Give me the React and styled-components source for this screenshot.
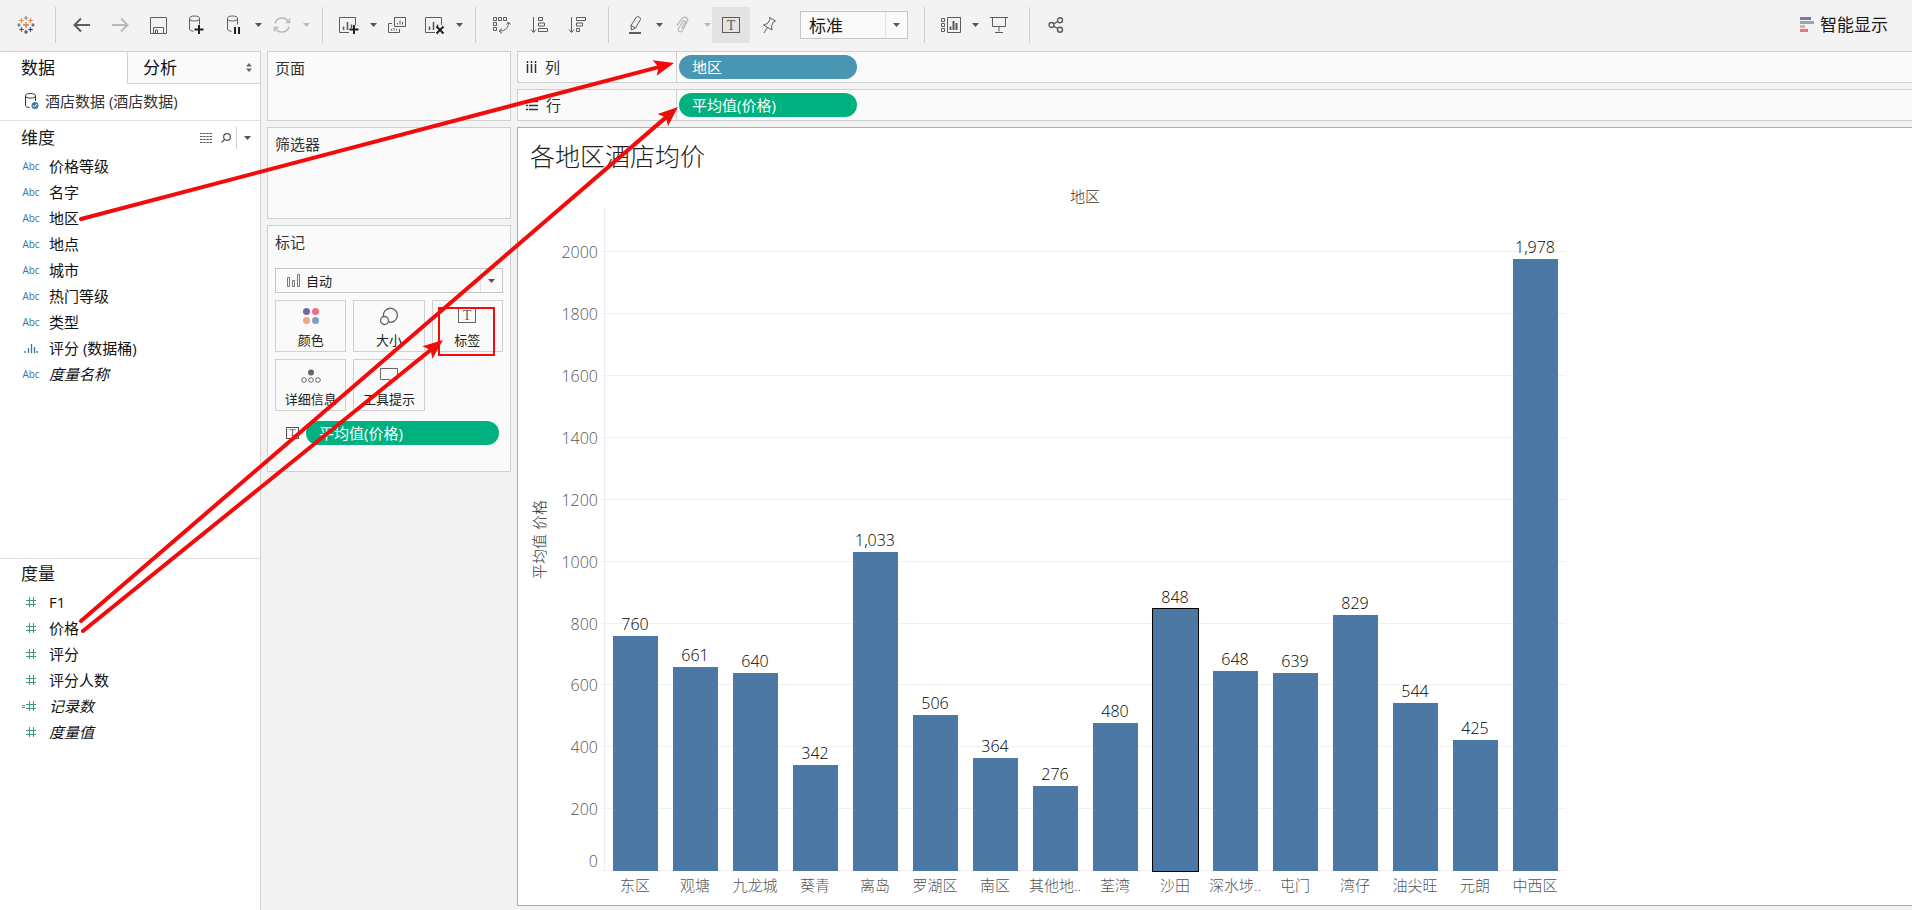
import styled, { createGlobalStyle, css } from 'styled-components';

const GlobalStyle = createGlobalStyle`
	* {
		box-sizing: border-box;
	}
	body {
		margin: 0;
		background: #f3f3f3;
		color: #1a1a1a;
		font-family: 'Open Sans', 'Noto Sans CJK SC', sans-serif;
		font-size: 15px;
		line-height: 20px;
	}
	button, select {
		font: inherit;
		color: inherit;
	}
	button {
		padding: 0;
		border: 0;
		background: none;
		cursor: pointer;
	}
	h1, h2, ul {
		margin: 0;
		padding: 0;
		font-weight: 400;
	}
	svg {
		display: block;
		flex: none;
	}
`;

const Page = styled.div`
	position: relative;
	display: flex;
	flex-direction: column;
	min-height: 100vh;
	overflow: hidden;
`;

/* toolbar */

const Toolbar = styled.header`
	display: flex;
	align-items: flex-start;
	height: 51px;
	padding-top: 7px;
`;

const ToolGroup = styled.div`
	display: flex;
	align-items: center;
	height: 36px;
	padding: 0 ${({ $end }) => $end ?? 11}px 0 ${({ $start }) => $start ?? 7}px;
	border-right: ${({ $last }) => ($last ? '0' : '1px solid #cfcfcf')};
`;

const Tool = styled.button`
	display: flex;
	align-items: center;
	justify-content: center;
	width: 38px;
	height: 36px;
	color: #5c5c5c;
	background: ${({ $active }) => ($active ? '#e3e3e3' : 'none')};

	&:disabled {
		color: #b9b9b9;
	}
`;

const CaretButton = styled.button`
	display: flex;
	align-items: center;
	justify-content: center;
	width: 10px;
	height: 36px;
	color: #555;

	&:disabled {
		color: #b9b9b9;
	}
`;

const SmartButton = styled.button`
	display: flex;
	align-items: center;
	gap: 6px;
	height: 36px;
	margin-left: auto;
	margin-right: 24px;
	font-size: 17px;
`;

const SelectBox = styled.label`
	position: relative;
	display: flex;
	align-items: center;
	width: ${({ $wide }) => ($wide ? '100%' : '108px')};
	height: ${({ $wide }) => ($wide ? 25 : 28)}px;
	margin-left: ${({ $wide }) => ($wide ? 0 : 12)}px;
	padding-left: ${({ $wide }) => ($wide ? 11 : 8)}px;
	gap: 6px;
	border: 1px solid #c6c6c6;
	background: #fafafa;
	font-size: ${({ $wide }) => ($wide ? 13 : 17)}px;

	select {
		flex: 1;
		min-width: 0;
		height: 100%;
		padding: ${({ $wide }) => ($wide ? 0 : 2)}px 0 0;
		border: 0;
		outline: 0;
		background: none;
		appearance: none;
	}
`;

const SelectCaret = styled.span`
	position: absolute;
	right: 0;
	top: 0;
	bottom: 0;
	display: flex;
	align-items: center;
	justify-content: center;
	width: 22px;
	border-left: 1px solid #e2e2e2;
	color: #555;
	pointer-events: none;
`;

/* columns */

const Body = styled.div`
	flex: 1;
	display: flex;
	gap: 6px;
`;

const DataPane = styled.aside`
	flex: 0 0 261px;
	display: flex;
	flex-direction: column;
	border-top: 1px solid #d0d0d0;
	border-right: 1px solid #d0d0d0;
	background: #fff;
`;

const Tabs = styled.div`
	display: flex;
	height: 32px;
`;

const Tab = styled.button`
	display: flex;
	align-items: center;
	flex: ${({ $active }) => ($active ? '0 0 127px' : '1')};
	padding: 0 8px 0 ${({ $active }) => ($active ? 21 : 15)}px;
	font-size: 17px;
	color: #111;
	${({ $active }) =>
		!$active &&
		css`
			justify-content: space-between;
			border-left: 1px solid #d0d0d0;
			border-bottom: 1px solid #d0d0d0;
			background: #fafafa;
		`}
`;

const Source = styled.div`
	display: flex;
	align-items: center;
	gap: 6px;
	height: 37px;
	padding: 0 0 2px 25px;
	border-bottom: 1px solid #dedede;
	color: #333;
`;

const Section = styled.section`
	flex: ${({ $first }) => ($first ? '1' : '0 0 351px')};
	padding-top: ${({ $first }) => ($first ? 2 : 0)}px;
	border-bottom: ${({ $first }) => ($first ? '1px solid #dedede' : '0')};
`;

const SectionHead = styled.div`
	display: flex;
	align-items: center;
	height: 30px;
	padding: 0 2px 0 21px;

	h2 {
		flex: 1;
		font-size: 17px;
	}
`;

const HeadTool = styled.button`
	display: flex;
	align-items: center;
	justify-content: center;
	width: ${({ $width }) => $width}px;
	height: 22px;
	color: #555;
	border-left: ${({ $divided }) => ($divided ? '1px solid #d0d0d0' : '0')};
`;

const FieldList = styled.ul`
	list-style: none;
`;

const Field = styled.li`
	display: flex;
	align-items: center;
	height: 26px;
	color: #111;
	font-style: ${({ $italic }) => ($italic ? 'italic' : 'normal')};
`;

const FieldType = styled.span`
	display: flex;
	justify-content: center;
	width: 49px;
	padding-left: 13px;
	font-size: 10px;
	font-style: normal;
	color: ${({ $green }) => ($green ? '#3c9a82' : '#3a7595')};
`;

const Cards = styled.div`
	flex: 0 0 244px;
	display: flex;
	flex-direction: column;
	gap: 6px;
`;

const Card = styled.section`
	min-height: ${({ $height }) => $height}px;
	padding: 5px 7px 7px;
	border: 1px solid #cfcfcf;
	background: #fafafa;

	h2 {
		margin-bottom: 15px;
		font-size: 15px;
		line-height: 22px;
		color: #333;
	}
`;

const MarkGrid = styled.div`
	display: grid;
	grid-template-columns: repeat(3, 1fr);
	gap: 7px;
	margin-top: 7px;
`;

const MarkButton = styled.button`
	display: flex;
	flex-direction: column;
	align-items: center;
	justify-content: space-between;
	height: 52px;
	padding: 6px 0 1px;
	border: 1px solid #d0d0d0;
	font-size: 13px;
	color: #222;

	svg {
		color: #666;
	}
`;

const MarkRow = styled.div`
	display: flex;
	align-items: center;
	gap: 7px;
	margin-top: 10px;
	padding: 0 4px 0 11px;
	color: #555;
`;

const Pill = styled.button`
	height: 24px;
	width: ${({ $fill }) => ($fill ? 'auto' : '178px')};
	flex: ${({ $fill }) => ($fill ? '1' : 'none')};
	padding: 0 13px;
	border-radius: 12px;
	background: ${({ $blue }) => ($blue ? '#4996b2' : '#00b180')};
	color: #fff;
	text-align: left;
`;

const Main = styled.main`
	flex: 1;
	min-width: 0;
	display: flex;
	flex-direction: column;
	gap: 6px;
	padding-bottom: 4px;
`;

const Shelf = styled.div`
	display: flex;
	height: 32px;
	border: 1px solid #cfcfcf;
	border-right: 0;
	background: #fafafa;
`;

const ShelfName = styled.div`
	display: flex;
	align-items: center;
	gap: 8px;
	width: 159px;
	padding-left: 8px;
	border-right: 1px solid #cfcfcf;
	color: #333;
`;

const ShelfDrop = styled.div`
	flex: 1;
	display: flex;
	align-items: center;
	padding-left: 2px;
`;

/* chart */

const View = styled.section`
	flex: 1;
	display: flex;
	flex-direction: column;
	border: 1px solid #adadad;
	border-right: 0;
	background: #fff;
	font-weight: 300;
`;

const Title = styled.h1`
	padding: 10px 12px 12px;
	font-size: 25px;
	font-weight: 300;
	line-height: 36px;
	color: #222;
`;

const ChartGrid = styled.div`
	flex: 1;
	display: grid;
	grid-template-columns: 42px 38px 6px 962px;
	grid-template-rows: 21px 1fr 34px;
`;

const FieldHeader = styled.div`
	grid-column: 4;
	text-align: center;
	color: #333;
`;

const AxisTitle = styled.div`
	grid-row: 2;
	grid-column: 1;
	align-self: center;
	justify-self: center;
	writing-mode: vertical-rl;
	text-orientation: sideways;
	transform: rotate(180deg);
	color: #333;
`;

const Axis = styled.div`
	grid-row: 2;
	grid-column: 2;
	position: relative;
	font-size: 16px;
	color: #555;
`;

const Tick = styled.span`
	position: absolute;
	right: 0;
	margin-bottom: ${({ $zero }) => ($zero ? 0 : -10)}px;
`;

const Plot = styled.div`
	grid-row: 2;
	grid-column: 4;
	position: relative;
	display: flex;
	border-left: 1px solid #ececec;
`;

const GridLine = styled.span`
	position: absolute;
	left: -4px;
	right: 0;
	height: 1px;
	background: #f0f0f0;
`;

const Column = styled.div`
	position: relative;
	display: flex;
	flex-direction: column;
	justify-content: flex-end;
	align-items: center;
	width: 60px;
	font-size: 16px;
	color: #000;
`;

const BarLabel = styled.span`
	flex: none;
	margin-bottom: 2px;
`;

const Bar = styled.div`
	flex: none;
	width: 45px;
	background: #4c78a6;
	outline: ${({ $selected }) => ($selected ? '1px solid #000' : 'none')};
`;

const Categories = styled.div`
	grid-row: 3;
	grid-column: 4;
	display: flex;
	padding: 4px 0 0 1px;
	color: #555;

	span {
		width: 60px;
		text-align: center;
		white-space: nowrap;
	}
`;

const Overlay = styled.svg`
	position: absolute;
	left: 0;
	top: 0;
	pointer-events: none;
`;

/* icons */

const Icon = ({ size = 20, width, height, children, ...rest }) => (
	<svg
		width={width || size}
		height={height || size}
		viewBox={`0 0 ${width || size} ${height || size}`}
		fill='none'
		stroke='currentColor'
		aria-hidden='true'
		{...rest}
	>
		{children}
	</svg>
);

const Caret = () => (
	<svg width='7' height='4' viewBox='0 0 7 4' aria-hidden='true'>
		<path d='M0 0h7L3.5 4z' fill='currentColor' />
	</svg>
);

const plus = (x, y, r, color, w = 1.2) => (
	<path
		key={`${x}-${y}`}
		d={`M${x - r} ${y}h${r * 2}M${x} ${y - r}v${r * 2}`}
		stroke={color}
		strokeWidth={w}
	/>
);

const LogoIcon = () => (
	<Icon size={18}>
		{plus(9, 9, 3, '#e8762c', 1.3)}
		{plus(9, 2, 2, '#7a8f9b')}
		{plus(9, 16, 2, '#3a3f72')}
		{plus(2, 9, 1.7, '#5b6591')}
		{plus(16, 9, 1.7, '#7a4a5e')}
		{plus(4.5, 4.5, 2.3, '#eb912c')}
		{plus(13.5, 4.5, 2.3, '#e08a4a')}
		{plus(4.5, 13.5, 2.3, '#c72035')}
		{plus(13.5, 13.5, 2.3, '#1f447e')}
	</Icon>
);

const BackIcon = ({ flip }) => (
	<Icon size={18} strokeWidth='2' transform={flip ? 'scale(-1 1)' : undefined}>
		<path d='M17 9H2M8 2.5L1.5 9 8 15.5' />
	</Icon>
);

const SaveIcon = () => (
	<Icon size={17}>
		<path d='M.5 .5h16v16H.5zM3.500 16v-5.500h10v6M5.500 16v-3h2v3' />
	</Icon>
);

const CylinderIcon = ({ children }) => (
	<Icon width={16} height={20}>
		<ellipse cx='6.5' cy='3.500' rx='5' ry='2.500' />
		<path d='M1.500 3.500v10.500c0 1.200 1.800 2 4 2.300M11.500 3.500v6' />
		{children}
	</Icon>
);

const RefreshIcon = () => (
	<Icon size={18} strokeWidth='1.500'>
		<path d='M2 7.500A7.200 7.200 0 0 1 15.500 6M16 10.500A7.200 7.200 0 0 1 2.500 12' />
		<path d='M16.500 2.500v4h-4M1.500 15.500v-4h4' />
	</Icon>
);

const ChartIcon = ({ children }) => (
	<Icon width={20} height={19}>
		<path d='M10 16.500H.5V1.500h16V9' />
		<path d='M4.500 14V10.500M8.500 14V6M12.500 12V8.500' strokeWidth='1.600' />
		{children}
	</Icon>
);

const DuplicateIcon = () => (
	<Icon width={18} height={17}>
		<path d='M6.500.5h11v9h-11zM4 6.500H.5v9h11V12' />
		<path d='M9.500 7.500V6M12 7.500V3.500M14.500 7.500V5M3.500 13.500V12M6 13.500V11M8.500 13.500V12' />
	</Icon>
);

const SwapIcon = () => (
	<Icon width={19} height={18}>
		<path d='M1.500 1.500h3v3h-3zM6.500 1.500h3v3h-3zM11.500 1.500h3v3h-3zM1.500 6.500h3v3h-3zM1.500 11.500h3v3h-3z' />
		<path d='M16.500 6.500c0 5-2.500 8.500-9 8.500M14.500 8.500l2-2.500 2 2.500M10 12.500L7 15l3 2.500' />
	</Icon>
);

const SortAscIcon = () => (
	<Icon size={18}>
		<path d='M3.500 1v15M1 13.500l2.500 3 2.500-3' />
		<path d='M8.500 1.500h4v3h-4zM8.500 7h6v3h-6zM8.500 12.500h9v3h-9z' />
	</Icon>
);

const SortDescIcon = () => (
	<Icon size={18}>
		<path d='M3.500 1v15M1 13.500l2.500 3 2.500-3' />
		<path d='M8.500 1.500h9v3h-9zM8.500 7h6v3h-6zM8.500 12.500h3v3h-3z' />
	</Icon>
);

const HighlightIcon = () => (
	<Icon size={18}>
		<path d='M5 9.500L10.500 1c1.500-1 4.500.5 4 2.500L9.500 12l-4 2zM5 9.500l4.500 2.500' />
		<path d='M3 17h12' strokeWidth='2' />
	</Icon>
);

const ClipIcon = () => (
	<Icon size={18}>
		<path
			d='M3 9.500L8 2.500c2.300-3 7-.3 5.300 3L8.500 14.500c-1.800 2.700-5.500.5-4-2L9 5.500c1.200-1.500 3-.2 2.200 1.200L7.500 12.500'
			strokeWidth='1.300'
		/>
	</Icon>
);

const TextIcon = ({ width = 18, height = 16, size = 14 }) => (
	<Icon width={width} height={height}>
		<rect x='.5' y='.5' width={width - 1} height={height - 1} />
		<text
			x={width / 2}
			y={height / 2 + size / 3}
			textAnchor='middle'
			fontFamily='Liberation Serif, serif'
			fontSize={size}
			fontWeight='400'
			fill='currentColor'
			stroke='none'
		>
			T
		</text>
	</Icon>
);

const PinIcon = () => (
	<Icon size={18}>
		<path d='M9.500 1.500l6 3.500-2 .8-2 4 .5 4.200-8.500-5 4-1.500 2.500-4zM7.500 11.500L4 17' />
	</Icon>
);

const CardsIcon = () => (
	<Icon width={20} height={16}>
		<path d='M.5 1.500h3v3h-3zM.5 6.500h3v3h-3zM.5 11.500h3v3h-3zM6.500.5h13v15h-13z' />
		<path d='M9.500 13V9.500M12.500 13V4M15.500 13V6' strokeWidth='2' />
	</Icon>
);

const PresentIcon = () => (
	<Icon size={18}>
		<path d='M0 1.500h18M2.500 1.500v9h13v-9M9 10.500v5M5 16.500h8' />
	</Icon>
);

const ShareIcon = () => (
	<Icon size={16} strokeWidth='1.400'>
		<circle cx='3.500' cy='8' r='2.500' />
		<circle cx='12' cy='3.300' r='2.500' />
		<circle cx='12' cy='12.700' r='2.500' />
		<path d='M5.700 6.800l4.200-2.300M5.700 9.200l4.200 2.300' />
	</Icon>
);

const SmartIcon = () => (
	<Icon width={14} height={16} stroke='none'>
		<path d='M0 0h11v3H0z' fill='#8073a5' />
		<path d='M0 4h14v3H0z' fill='#89a8c4' />
		<path d='M0 8h5v3H0z' fill='#f0a78c' />
		<path d='M0 12h8v3H0z' fill='#ef7480' />
	</Icon>
);

const HashIcon = ({ computed }) => (
	<Icon width={18} height={12}>
		<path d='M7.500 1v10M11.500 1v10M4 4.500h10M4 8.500h10' />
		{computed && <path d='M0 5.500h3M0 7.500h3' />}
	</Icon>
);

const BinIcon = () => (
	<Icon width={14} height={10}>
		<path d='M1 10V8M4.500 10V5M7.500 10V1M10.500 10V4M13 10V8' strokeWidth='1.300' />
	</Icon>
);

const fieldIcons = {
	abc: 'Abc',
	bin: <BinIcon />,
	num: <HashIcon />,
	calc: <HashIcon computed />,
};

/* data */

const dimensions = [
	['价格等级', 'abc'],
	['名字', 'abc'],
	['地区', 'abc'],
	['地点', 'abc'],
	['城市', 'abc'],
	['热门等级', 'abc'],
	['类型', 'abc'],
	['评分 (数据桶)', 'bin'],
	['度量名称', 'abc', true],
];

const measures = [
	['F1', 'num'],
	['价格', 'num'],
	['评分', 'num'],
	['评分人数', 'num'],
	['记录数', 'calc', true],
	['度量值', 'num', true],
];

const regions = [
	['东区', 760],
	['观塘', 661],
	['九龙城', 640],
	['葵青', 342],
	['离岛', 1033],
	['罗湖区', 506],
	['南区', 364],
	['其他地..', 276],
	['荃湾', 480],
	['沙田', 848],
	['深水埗..', 648],
	['屯门', 639],
	['湾仔', 829],
	['油尖旺', 544],
	['元朗', 425],
	['中西区', 1978],
];

const AXIS_MAX = 2147;
const ticks = [0, 200, 400, 600, 800, 1000, 1200, 1400, 1600, 1800, 2000];
const percent = (value) => `${(value / AXIS_MAX) * 100}%`;

const arrows = [
	[81, 219, 674, 63],
	[81, 621, 678, 107],
	[83, 631, 443, 340],
];

function Arrow({ from, to }) {
	const angle = (Math.atan2(to[1] - from[1], to[0] - from[0]) * 180) / Math.PI;
	const length = Math.hypot(to[0] - from[0], to[1] - from[1]);
	return (
		<g transform={`translate(${from[0]} ${from[1]}) rotate(${angle})`}>
			<path d={`M0 0H${length - 14}`} strokeWidth='4' strokeLinecap='round' />
			<path
				d={`M${length} 0l-20 -8 4 8 -4 8z`}
				fill='#f30b0b'
				stroke='none'
			/>
		</g>
	);
}

function Fields({ items }) {
	return (
		<FieldList>
			{items.map(([name, type, italic]) => (
				<Field key={name} $italic={italic}>
					<FieldType $green={type === 'num' || type === 'calc'}>
						{fieldIcons[type]}
					</FieldType>
					{name}
				</Field>
			))}
		</FieldList>
	);
}

function TopBar() {
	return (
		<Toolbar>
			<ToolGroup $start={7} $end={10}>
				<Tool aria-label='开始'>
					<LogoIcon />
				</Tool>
			</ToolGroup>
			<ToolGroup>
				<Tool aria-label='撤销'>
					<BackIcon />
				</Tool>
				<Tool aria-label='重做' disabled>
					<BackIcon flip />
				</Tool>
				<Tool aria-label='保存'>
					<SaveIcon />
				</Tool>
				<Tool aria-label='新建数据源'>
					<CylinderIcon>
						<path d='M6.500 14.500h9M11 10v9' stroke='#222' strokeWidth='2' />
					</CylinderIcon>
				</Tool>
				<Tool aria-label='暂停自动更新'>
					<CylinderIcon>
						<path d='M9 12v7M13 12v7' stroke='#222' strokeWidth='2' />
					</CylinderIcon>
				</Tool>
				<CaretButton aria-label='更新选项'>
					<Caret />
				</CaretButton>
				<Tool aria-label='运行更新' disabled>
					<RefreshIcon />
				</Tool>
				<CaretButton aria-label='运行选项' disabled>
					<Caret />
				</CaretButton>
			</ToolGroup>
			<ToolGroup>
				<Tool aria-label='新建工作表'>
					<ChartIcon>
						<path d='M10.500 13.500h9M15 9v9' stroke='#222' strokeWidth='2' />
					</ChartIcon>
				</Tool>
				<CaretButton aria-label='新建选项'>
					<Caret />
				</CaretButton>
				<Tool aria-label='复制'>
					<DuplicateIcon />
				</Tool>
				<Tool aria-label='清除工作表'>
					<ChartIcon>
						<path d='M11.500 10.500l7 7M18.500 10.500l-7 7' stroke='#222' strokeWidth='2' />
					</ChartIcon>
				</Tool>
				<CaretButton aria-label='清除选项'>
					<Caret />
				</CaretButton>
			</ToolGroup>
			<ToolGroup $start={6} $end={12}>
				<Tool aria-label='交换行和列'>
					<SwapIcon />
				</Tool>
				<Tool aria-label='升序排序'>
					<SortAscIcon />
				</Tool>
				<Tool aria-label='降序排序'>
					<SortDescIcon />
				</Tool>
			</ToolGroup>
			<ToolGroup $end={16}>
				<Tool aria-label='突出显示'>
					<HighlightIcon />
				</Tool>
				<CaretButton aria-label='突出显示选项'>
					<Caret />
				</CaretButton>
				<Tool aria-label='组成员' disabled>
					<ClipIcon />
				</Tool>
				<CaretButton aria-label='组选项' disabled>
					<Caret />
				</CaretButton>
				<Tool aria-label='显示标记标签' $active>
					<TextIcon />
				</Tool>
				<Tool aria-label='固定轴'>
					<PinIcon />
				</Tool>
				<SelectBox>
					<select aria-label='适合' defaultValue='标准'>
						<option>标准</option>
					</select>
					<SelectCaret>
						<Caret />
					</SelectCaret>
				</SelectBox>
			</ToolGroup>
			<ToolGroup>
				<Tool aria-label='显示卡'>
					<CardsIcon />
				</Tool>
				<CaretButton aria-label='显示卡选项'>
					<Caret />
				</CaretButton>
				<Tool aria-label='演示模式'>
					<PresentIcon />
				</Tool>
			</ToolGroup>
			<ToolGroup $last>
				<Tool aria-label='共享'>
					<ShareIcon />
				</Tool>
			</ToolGroup>
			<SmartButton>
				<SmartIcon />
				智能显示
			</SmartButton>
		</Toolbar>
	);
}

function Marks() {
	return (
		<Card $height={247}>
			<h2>标记</h2>
			<SelectBox $wide>
				<Icon width={13} height={13}>
					<path d='M.5 3.500h2v9h-2zM5.500 6.500h2v6h-2zM10.500.5h2v12h-2z' stroke='#777' />
				</Icon>
				<select aria-label='标记类型' defaultValue='自动'>
					<option>自动</option>
				</select>
				<SelectCaret>
					<Caret />
				</SelectCaret>
			</SelectBox>
			<MarkGrid>
				<MarkButton>
					<Icon size={18} stroke='none'>
						<circle cx='4.500' cy='4.500' r='3.500' fill='#7566a0' />
						<circle cx='13.500' cy='4.500' r='3.500' fill='#ef6f80' />
						<circle cx='4.500' cy='13.500' r='3.500' fill='#f0a77c' />
						<circle cx='13.500' cy='13.500' r='3.500' fill='#7f9fc6' />
					</Icon>
					颜色
				</MarkButton>
				<MarkButton>
					<Icon size={19} strokeWidth='1.300'>
						<path d='M4.500 9.500A7 7 0 1 1 9.500 15' />
						<circle cx='5.500' cy='13.500' r='4' />
					</Icon>
					大小
				</MarkButton>
				<MarkButton>
					<TextIcon />
					标签
				</MarkButton>
				<MarkButton>
					<Icon size={20}>
						<circle cx='10' cy='6.500' r='3' fill='#666' stroke='none' />
						<circle cx='3' cy='14' r='2.300' />
						<circle cx='10' cy='14' r='2.300' />
						<circle cx='17' cy='14' r='2.300' />
					</Icon>
					详细信息
				</MarkButton>
				<MarkButton>
					<Icon size={18}>
						<path d='M.5 2.500h17v11h-5l-2.500 3v-3H.5z' />
					</Icon>
					工具提示
				</MarkButton>
			</MarkGrid>
			<MarkRow>
				<TextIcon width={13} height={12} size={10} />
				<Pill $fill>平均值(价格)</Pill>
			</MarkRow>
		</Card>
	);
}

function Chart() {
	return (
		<View>
			<Title>各地区酒店均价</Title>
			<ChartGrid>
				<FieldHeader>地区</FieldHeader>
				<AxisTitle>平均值 价格</AxisTitle>
				<Axis>
					{ticks.map((tick) => (
						<Tick key={tick} $zero={tick === 0} style={{ bottom: percent(tick) }}>
							{tick}
						</Tick>
					))}
				</Axis>
				<Plot>
					{ticks.map((tick) => (
						<GridLine key={tick} style={{ bottom: percent(tick) }} />
					))}
					{regions.map(([name, value]) => (
						<Column key={name}>
							<BarLabel>{value.toLocaleString('en-US')}</BarLabel>
							<Bar $selected={name === '沙田'} style={{ height: percent(value) }} />
						</Column>
					))}
				</Plot>
				<Categories>
					{regions.map(([name]) => (
						<span key={name}>{name}</span>
					))}
				</Categories>
			</ChartGrid>
		</View>
	);
}

export default function App() {
	return (
		<Page>
			<GlobalStyle />
			<TopBar />
			<Body>
				<DataPane>
					<Tabs>
						<Tab $active>数据</Tab>
						<Tab>
							分析
							<svg width='6' height='9' viewBox='0 0 6 9' aria-hidden='true'>
								<path d='M0 3.500h6L3 0zM0 5.500h6L3 9z' fill='#666' />
							</svg>
						</Tab>
					</Tabs>
					<Source>
						<Icon width={14} height={17}>
							<ellipse cx='5.500' cy='2.800' rx='5' ry='2.300' />
							<path d='M.5 3v9.500c0 1 1.500 1.800 4 2M10.500 3v5' />
							<circle cx='10' cy='12.500' r='3.500' fill='#3a7fa0' stroke='none' />
							<path d='M8 12.500l1.500 1.500 2.500-3' stroke='#fff' />
						</Icon>
						酒店数据 (酒店数据)
					</Source>
					<Section $first>
						<SectionHead>
							<h2>维度</h2>
							<HeadTool $width={20} aria-label='查看数据'>
								<Icon width={12} height={10}>
									<path
										d='M0 .5h12M0 3.500h12M0 6.500h12M0 9.500h12'
										strokeDasharray='2.400 .8'
									/>
								</Icon>
							</HeadTool>
							<HeadTool $width={20} aria-label='查找字段'>
								<Icon size={10} strokeWidth='1.200'>
									<circle cx='6' cy='4' r='3.400' />
									<path d='M3.500 6.500L.5 9.500' />
								</Icon>
							</HeadTool>
							<HeadTool $width={22} $divided aria-label='维度选项'>
								<Caret />
							</HeadTool>
						</SectionHead>
						<Fields items={dimensions} />
					</Section>
					<Section>
						<SectionHead>
							<h2>度量</h2>
						</SectionHead>
						<Fields items={measures} />
					</Section>
				</DataPane>
				<Cards>
					<Card $height={70}>
						<h2>页面</h2>
					</Card>
					<Card $height={92}>
						<h2>筛选器</h2>
					</Card>
					<Marks />
				</Cards>
				<Main>
					<Shelf>
						<ShelfName>
							<Icon width={11} height={13} strokeWidth='1.500'>
								<path d='M1.500 3v9M5.500 3v9M9.500 3v9' />
								<path d='M1.500 0v2M5.500 0v2M9.500 0v2' />
							</Icon>
							列
						</ShelfName>
						<ShelfDrop>
							<Pill $blue>地区</Pill>
						</ShelfDrop>
					</Shelf>
					<Shelf>
						<ShelfName>
							<Icon width={12} height={11}>
								<path d='M0 1.500h2M3 1.500h9M0 5.500h2M3 5.500h9M0 9.500h2M3 9.500h9' strokeWidth='1.500' />
							</Icon>
							行
						</ShelfName>
						<ShelfDrop>
							<Pill>平均值(价格)</Pill>
						</ShelfDrop>
					</Shelf>
					<Chart />
				</Main>
			</Body>
			<Overlay width='700' height='660' fill='none' stroke='#f30b0b' aria-hidden='true'>
				<rect x='439' y='308' width='55' height='47' strokeWidth='2' />
				{arrows.map(([x1, y1, x2, y2]) => (
					<Arrow key={y1} from={[x1, y1]} to={[x2, y2]} />
				))}
			</Overlay>
		</Page>
	);
}
